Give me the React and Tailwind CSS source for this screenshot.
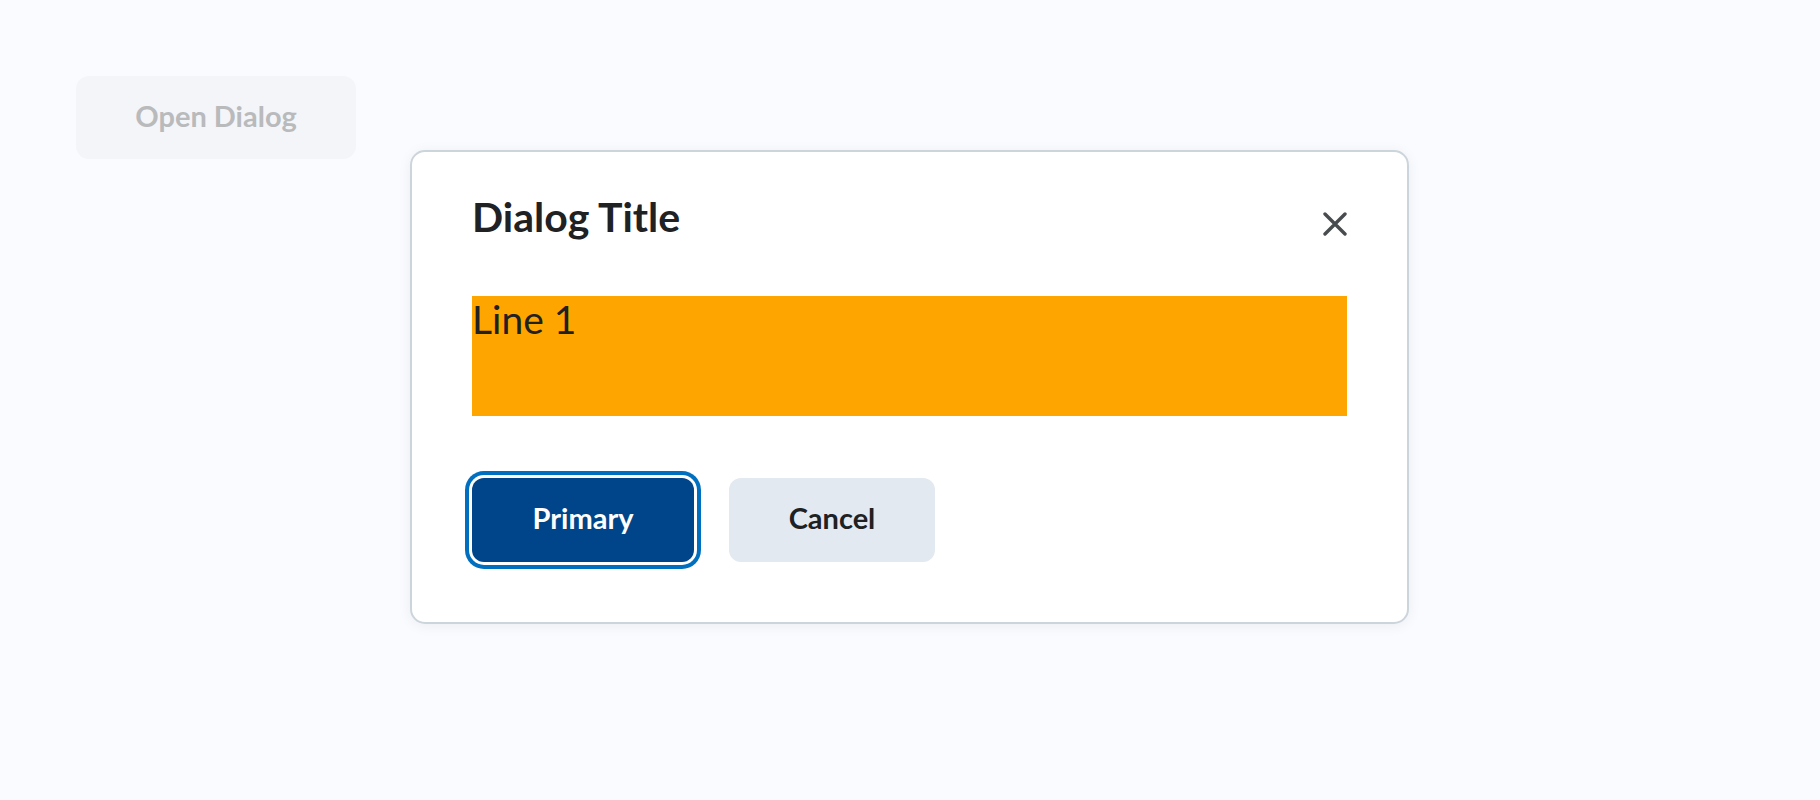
import React from "react";

const font = { fontFamily: "Lato, 'Noto Sans', sans-serif" };

const CloseIcon = () => (
  <svg width="24" height="24" viewBox="0 0 24 24" fill="none">
    <path d="M2 2 L22 22 M22 2 L2 22" stroke="#494c4e" strokeWidth="3.4" strokeLinecap="round" />
  </svg>
);

export default function App() {
  return (
    <div className="relative min-h-screen bg-[#f9fbff]" style={font}>
      <div className="pt-[76px] pl-[76px]">
        <button
          disabled
          className="w-[280px] h-[83px] pb-[3px] rounded-[13px] bg-[#f3f5f9] text-[#b9babc] text-[29px] font-bold"
        >
          Open Dialog
        </button>
      </div>

      {/* modal, sits over the page */}
      <div className="absolute left-[410px] top-[150px] w-[999px] rounded-[15px] border-2 border-[#cdd5dc] bg-white shadow-[0_2px_14px_rgba(0,0,0,0.06)] px-[60px] pt-[44px] pb-[60px]">
        <div className="flex items-start justify-between">
          <h2 className="text-[41px] leading-none font-bold text-[#202122]">Dialog Title</h2>
          <button className="mt-[16px]" title="Close">
            <CloseIcon />
          </button>
        </div>

        <div className="mt-[59px] h-[120px] bg-[#ffa500] text-[39px] leading-[46px] text-[#202122]">
          Line 1
        </div>

        <div className="mt-[62px] flex items-center gap-[35px]">
          <button className="w-[222px] h-[84px] pb-[4px] rounded-[12px] bg-[#004489] text-white text-[29px] font-bold shadow-[0_0_0_3px_#ffffff,0_0_0_7px_#006fbf]">
            Primary
          </button>
          <button className="w-[206px] h-[84px] pb-[4px] rounded-[12px] bg-[#e3e9f1] text-[#202122] text-[29px] font-bold">
            Cancel
          </button>
        </div>
      </div>
    </div>
  );
}
